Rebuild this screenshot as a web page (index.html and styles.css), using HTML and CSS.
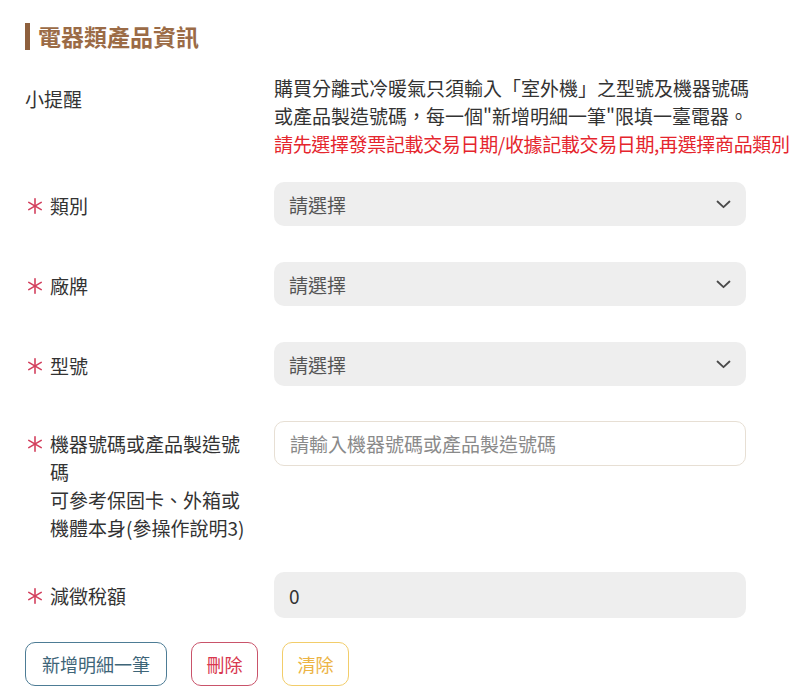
FILE: index.html
```html
<!DOCTYPE html>
<html lang="zh-Hant">
<head>
<meta charset="utf-8">
<title>電器類產品資訊</title>
<link rel="stylesheet" href="styles.css">
</head>
<body>
<div class="page">
  <h2 class="title">電器類產品資訊</h2>

  <div class="row row-hint">
    <div class="label"><span class="label-text">小提醒</span></div>
    <div class="hint">
      <div class="hint-line">購買分離式冷暖氣只須輸入「室外機」之型號及機器號碼</div>
      <div class="hint-line">或產品製造號碼，每一個"新增明細一筆"限填一臺電器。</div>
      <div class="hint-line red">請先選擇發票記載交易日期/收據記載交易日期,再選擇商品類別</div>
    </div>
  </div>

  <div class="rows">
    <div class="row">
      <div class="label">
        <span class="star"><svg width="16" height="16" viewBox="0 0 16 16"><g stroke="#d3405e" stroke-width="1.6" stroke-linecap="round"><line x1="8" y1="0.8" x2="8" y2="15.2"/><line x1="1.8" y1="4.4" x2="14.2" y2="11.6"/><line x1="1.8" y1="11.6" x2="14.2" y2="4.4"/></g></svg></span>
        <span class="label-text">類別</span>
      </div>
      <div class="select"><span>請選擇</span><svg class="chev" width="15" height="9" viewBox="0 0 15 9"><path d="M1.5 1.5 L7.5 7.2 L13.5 1.5" fill="none" stroke="#4a4a4a" stroke-width="1.8" stroke-linecap="round" stroke-linejoin="round"/></svg></div>
    </div>

    <div class="row">
      <div class="label">
        <span class="star"><svg width="16" height="16" viewBox="0 0 16 16"><g stroke="#d3405e" stroke-width="1.6" stroke-linecap="round"><line x1="8" y1="0.8" x2="8" y2="15.2"/><line x1="1.8" y1="4.4" x2="14.2" y2="11.6"/><line x1="1.8" y1="11.6" x2="14.2" y2="4.4"/></g></svg></span>
        <span class="label-text">廠牌</span>
      </div>
      <div class="select"><span>請選擇</span><svg class="chev" width="15" height="9" viewBox="0 0 15 9"><path d="M1.5 1.5 L7.5 7.2 L13.5 1.5" fill="none" stroke="#4a4a4a" stroke-width="1.8" stroke-linecap="round" stroke-linejoin="round"/></svg></div>
    </div>

    <div class="row">
      <div class="label">
        <span class="star"><svg width="16" height="16" viewBox="0 0 16 16"><g stroke="#d3405e" stroke-width="1.6" stroke-linecap="round"><line x1="8" y1="0.8" x2="8" y2="15.2"/><line x1="1.8" y1="4.4" x2="14.2" y2="11.6"/><line x1="1.8" y1="11.6" x2="14.2" y2="4.4"/></g></svg></span>
        <span class="label-text">型號</span>
      </div>
      <div class="select"><span>請選擇</span><svg class="chev" width="15" height="9" viewBox="0 0 15 9"><path d="M1.5 1.5 L7.5 7.2 L13.5 1.5" fill="none" stroke="#4a4a4a" stroke-width="1.8" stroke-linecap="round" stroke-linejoin="round"/></svg></div>
    </div>

    <div class="row">
      <div class="label label-top">
        <span class="star"><svg width="16" height="16" viewBox="0 0 16 16"><g stroke="#d3405e" stroke-width="1.6" stroke-linecap="round"><line x1="8" y1="0.8" x2="8" y2="15.2"/><line x1="1.8" y1="4.4" x2="14.2" y2="11.6"/><line x1="1.8" y1="11.6" x2="14.2" y2="4.4"/></g></svg></span>
        <span class="label-text wrap">機器號碼或產品製造號碼<br>可參考保固卡、外箱或機體本身(參操作說明3)</span>
      </div>
      <div class="input"><span class="placeholder">請輸入機器號碼或產品製造號碼</span></div>
    </div>

    <div class="row row-tax">
      <div class="label">
        <span class="star"><svg width="16" height="16" viewBox="0 0 16 16"><g stroke="#d3405e" stroke-width="1.6" stroke-linecap="round"><line x1="8" y1="0.8" x2="8" y2="15.2"/><line x1="1.8" y1="4.4" x2="14.2" y2="11.6"/><line x1="1.8" y1="11.6" x2="14.2" y2="4.4"/></g></svg></span>
        <span class="label-text">減徵稅額</span>
      </div>
      <div class="select readonly"><span class="value">0</span></div>
    </div>
  </div>

  <div class="buttons">
    <button class="btn btn-blue">新增明細一筆</button>
    <button class="btn btn-red">刪除</button>
    <button class="btn btn-yellow">清除</button>
  </div>
</div>
</body>
</html>
```

FILE: styles.css
```css
* { box-sizing: border-box; }
html, body { margin: 0; padding: 0; background: #fff; }
body {
  font-family: "Noto Sans CJK TC", "Noto Sans", sans-serif;
  color: #333;
  font-size: 19px;
}
.page {
  padding: 23px 0 0 25px;
  width: 800px;
}
.title {
  margin: 0;
  font-size: 23px;
  line-height: 27px;
  height: 27px;
  font-weight: 700;
  color: #9b6b46;
  border-left: 5px solid #8e603d;
  padding-left: 8px;
  display: flex;
  align-items: center;
}
.row {
  display: flex;
  align-items: flex-start;
}
.row-hint {
  margin-top: 24px;
}
.label {
  width: 249px;
  flex: none;
  display: flex;
  align-items: flex-start;
  padding-top: 10px;
  line-height: 28px;
}
.label-top { padding-top: 8px; }
.row-hint .label { padding-top: 11px; }
.star {
  width: 25px;
  flex: none;
  height: 28px;
  display: flex;
  align-items: center;
  padding-left: 2px;
}
.label-text { color: #333; }
.label-text.wrap { width: 200px; }
.hint {
  line-height: 28px;
  white-space: nowrap;
  color: #333;
}
.hint .red { color: #e5252d; letter-spacing: -0.35px; }
.rows {
  display: flex;
  flex-direction: column;
  gap: 36px;
  margin-top: 24px;
}
.row-tax { margin-top: -6px; }
.select, .input {
  width: 472px;
  height: 44px;
  border-radius: 10px;
  display: flex;
  align-items: center;
  justify-content: space-between;
  padding: 0 15px;
}
.select {
  background: #eeeeee;
  color: #555;
}
.readonly { height: 46px; }
.select .value { color: #333; }
.input {
  background: #fff;
  border: 1px solid #e7dfd4;
  height: 45px;
  margin-top: -1px;
}
.placeholder { color: #8a8a8a; }
.buttons {
  display: flex;
  gap: 24px;
  margin-top: 24px;
}
.btn {
  font-family: "Noto Sans CJK TC", "Noto Sans", sans-serif;
  font-size: 18px;
  height: 44px;
  padding: 0 14.5px;
  background: #fff;
  border-radius: 10px;
  border: 1px solid;
  line-height: 1;
}
.btn-blue { border-color: #4d7c95; color: #3e6578; padding: 0 16px; }
.btn-red { border-color: #c9536a; color: #d8374e; }
.btn-yellow { border-color: #f2cd6a; color: #ecb445; }
```
